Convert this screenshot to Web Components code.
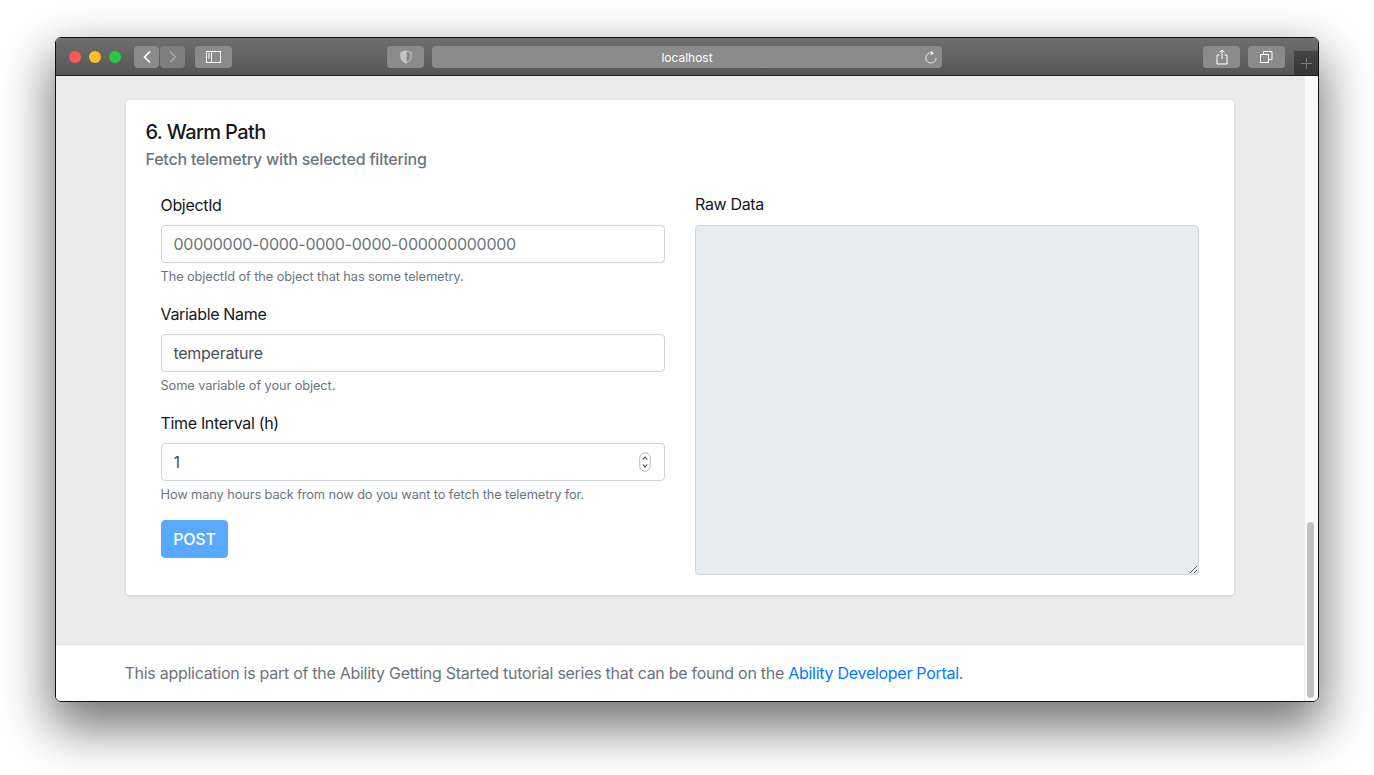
<!DOCTYPE html>
<html lang="en">
<head>
<meta charset="utf-8">
<title>Warm Path</title>
<style>
    html, body {
        margin: 0;
        height: 100%;
        overflow: hidden;
        background: #fff;
        font-family: Inter, "Noto Sans", sans-serif;
    }
</style>
</head>
<body>
<mac-window>
    <browser-toolbar slot="toolbar"></browser-toolbar>
    <warm-path-card></warm-path-card>
    <site-footer slot="footer">
        This application is part of the Ability Getting Started tutorial series that can be found on the
        <a href="#">Ability Developer Portal</a>.
    </site-footer>
</mac-window>

<script>
class MacWindow extends HTMLElement {
    constructor() {
        super();
        this.attachShadow({ mode: 'open' });
        this.shadowRoot.innerHTML = `
            <style>
                :host {
                    display: flex;
                    flex-direction: column;
                    box-sizing: border-box;
                    width: 1264px;
                    height: 665px;
                    margin: 37px 0 0 55px;
                    border: 1px solid #111;
                    border-radius: 6px;
                    overflow: hidden;
                    box-shadow: 0 22px 50px 4px rgba(0,0,0,.55);
                }
                .content { flex: 1; display: flex; min-height: 0; }
                .page { flex: 1; display: flex; flex-direction: column; min-width: 0; }
                main {
                    flex: 1;
                    background: #ebebeb;
                    padding: 24px 70px;
                }
                .scrollbar {
                    box-sizing: border-box;
                    width: 14px;
                    padding: 446px 3px 3px;
                    background: #fafafa;
                    border-left: 1px solid #efefef;
                    display: flex;
                }
                .thumb { flex: 1; margin-left: -1px; margin-right: 1px; background: #c1c1c1; border-radius: 4px; }
            </style>
            <slot name="toolbar"></slot>
            <div class="content">
                <div class="page">
                    <main><slot></slot></main>
                    <slot name="footer"></slot>
                </div>
                <div class="scrollbar"><div class="thumb"></div></div>
            </div>
        `;
    }
}

class BrowserToolbar extends HTMLElement {
    constructor() {
        super();
        this.attachShadow({ mode: 'open' });
        this.shadowRoot.innerHTML = `
            <style>
                :host {
                    display: flex;
                    align-items: flex-start;
                    box-sizing: border-box;
                    height: 38px;
                    padding-top: 8px;
                    background: linear-gradient(#6f6f6f, #565656);
                    border-bottom: 1px solid #1c1c1c;
                }
                .light { width: 12px; height: 12px; border-radius: 50%; margin: 5px 8px 0 0; }
                .btn {
                    box-sizing: border-box;
                    width: 37px;
                    height: 22px;
                    border-radius: 4px;
                    background: #8b8b8b;
                    display: flex;
                    align-items: center;
                    justify-content: center;
                }
                .nav { width: 25px; }
                .nav.off { background: #7e7e7e; }
                .address {
                    position: relative;
                    box-sizing: border-box;
                    width: 510px;
                    height: 22px;
                    margin-left: 8px;
                    border-radius: 4px;
                    background: #8b8b8b;
                    color: #fff;
                    font: 400 12px/23px Inter, sans-serif;
                    letter-spacing: -.02px;
                    text-align: center;
                }
                .address svg { position: absolute; right: 4px; top: 3px; }
                .newtab {
                    box-sizing: border-box;
                    width: 25px;
                    height: 25px;
                    margin: 4px 0 0 8px;
                    background: linear-gradient(#454545, #363636);
                    border-left: 1px solid #606060;
                    border-top: 1px solid #606060;
                    display: flex;
                    align-items: center;
                    justify-content: center;
                }
                svg { display: block; fill: none; stroke: #fff; stroke-width: 1; }
            </style>
            <span class="light" style="background:#fc5753;margin-left:13px"></span>
            <span class="light" style="background:#fdbc2e"></span>
            <span class="light" style="background:#27c93f;margin-right:13px"></span>
            <div class="btn nav" style="margin-right:1px">
                <svg width="10" height="14" viewBox="0 0 10 14" style="stroke-width:1.6"><path d="M8 1.5 2.5 7 8 12.5"/></svg>
            </div>
            <div class="btn nav off">
                <svg width="10" height="14" viewBox="0 0 10 14" style="stroke:#a8a8a8;stroke-width:1.4"><path d="M2 1.5 7.5 7 2 12.5"/></svg>
            </div>
            <div class="btn" style="margin-left:10px">
                <svg width="16" height="12" viewBox="0 0 16 12"><rect x=".5" y=".5" width="14" height="11"/><path d="M5.5 .5v11M2 3h2M2 5h2M2 7h2"/></svg>
            </div>
            <div class="btn" style="margin-left:155px">
                <svg width="12" height="14" viewBox="0 0 12 14" style="stroke:#c4c4c4"><path d="M6 1 1 2.6V7c0 3 2.2 4.8 5 6 2.8-1.2 5-3 5-6V2.6z"/><path d="M6 1 1 2.6V7c0 3 2.2 4.8 5 6z" fill="#c4c4c4"/></svg>
            </div>
            <div class="address">localhost
                <svg width="14" height="16" viewBox="0 0 14 16" style="stroke:#e6e6e6"><path d="M9.500 4.300A5.200 5.200 0 1 0 12.200 9"/><path d="M6.800 1.500 10 4.200 6.800 6.500z" fill="#e6e6e6" stroke="none"/></svg>
            </div>
            <div class="btn" style="margin-left:261px">
                <svg width="12" height="16" viewBox="0 0 12 16"><path d="M3.5 6H1v9h10V6H8.500M6 10V1M3.500 3.300 6 1l2.500 2.300"/></svg>
            </div>
            <div class="btn" style="margin-left:8px">
                <svg width="13" height="12" viewBox="0 0 13 12"><rect x=".5" y="3.500" width="8" height="8"/><path d="M3.500 3.500V.5h8.500v8H8.500"/></svg>
            </div>
            <div class="newtab">
                <svg width="11" height="11" viewBox="0 0 11 11" style="stroke:#7d7d7d"><path d="M5.500 0v11M0 5.500h11"/></svg>
            </div>
        `;
    }
}

class FormField extends HTMLElement {
    constructor() {
        super();
        this.attachShadow({ mode: 'open' });
        const type = this.getAttribute('type') || 'text';
        const value = this.getAttribute('value') || '';
        const placeholder = this.getAttribute('placeholder') || '';
        this.shadowRoot.innerHTML = `
            <style>
                :host { display: block; margin-bottom: 16px; }
                label {
                    display: block;
                    font-size: 16px;
                    line-height: 24px;
                    letter-spacing: -.33px;
                    margin-bottom: 8px;
                    text-indent: -.5px;
                    color: #16181b;
                }
                .control { position: relative; }
                input {
                    display: block;
                    box-sizing: border-box;
                    width: 100%;
                    height: 38px;
                    padding: 6px 12px 6px 11.500px;
                    border: 1px solid #ced4da;
                    border-radius: 4px;
                    background: #fff;
                    color: #495057;
                    font: 400 16px/24px Inter, sans-serif;
                    letter-spacing: -.28px;
                    outline: none;
                    -moz-appearance: textfield;
                }
                input::placeholder { color: #6c757d; opacity: 1; }
                input::-webkit-outer-spin-button,
                input::-webkit-inner-spin-button { -webkit-appearance: none; margin: 0; }
                .spin { position: absolute; right: 14px; top: 9px; display: none; }
                :host([type=number]) .spin { display: block; }
                small {
                    display: block;
                    margin-top: 4px;
                    font-size: 12.8px;
                    line-height: 19px;
                    letter-spacing: -.1px;
                    text-indent: -.5px;
                    color: #6c757d;
                }
            </style>
            <label><slot name="label"></slot></label>
            <div class="control">
                <input type="${type}" value="${value}" placeholder="${placeholder}">
                <svg class="spin" width="12" height="20" viewBox="0 0 12 20" fill="none">
                    <rect x=".75" y=".75" width="10.500" height="18.500" rx="5.250" stroke="#b9b9b9" stroke-width="1"/>
                    <path d="M3.800 7.500 6 5l2.200 2.500M3.800 12.500 6 15l2.200-2.500" stroke="#333" stroke-width="1.100"/>
                </svg>
            </div>
            <small><slot name="help"></slot></small>
        `;
    }
}

class WarmPathCard extends HTMLElement {
    constructor() {
        super();
        this.attachShadow({ mode: 'open' });
        this.shadowRoot.innerHTML = `
            <style>
                :host {
                    display: block;
                    box-sizing: border-box;
                    height: 495px;
                    padding: 20px;
                    background: #fff;
                    border-radius: 4px;
                    box-shadow: 0 1px 3px rgba(0,0,0,.12);
                }
                h5 {
                    margin: 0 0 6px;
                    font-size: 20px;
                    line-height: 24px;
                    font-weight: 500;
                    letter-spacing: -.62px;
                    text-indent: -.5px;
                    color: #16181b;
                }
                h6 {
                    margin: 0 0 24px;
                    font-size: 16px;
                    line-height: 19px;
                    font-weight: 500;
                    letter-spacing: -.2px;
                    text-indent: -.5px;
                    color: #6c757d;
                }
                .row { display: grid; grid-template-columns: 1fr 1fr; }
                .col { padding: 0 15px; min-width: 0; }
                .raw-label {
                    display: block;
                    font-size: 16px;
                    line-height: 24px;
                    letter-spacing: -.33px;
                    margin: -1px 0 9px;
                    color: #16181b;
                }
                textarea {
                    display: block;
                    box-sizing: border-box;
                    width: 100%;
                    height: 350px;
                    border: 1px solid #ced4da;
                    border-radius: 4px;
                    background: #e9ecef;
                    outline: none;
                }
                button {
                    height: 38px;
                    width: 67px;
                    padding: 0;
                    border: 1px solid #59a9ff;
                    border-radius: 4px;
                    background: #59a9ff;
                    color: #fff;
                    font: 500 16px Inter, sans-serif;
                    letter-spacing: -.2px;
                }
            </style>
            <h5>6. Warm Path</h5>
            <h6>Fetch telemetry with selected filtering</h6>
            <div class="row">
                <div class="col">
                    <form-field placeholder="00000000-0000-0000-0000-000000000000">
                        <span slot="label">ObjectId</span>
                        <span slot="help">The objectId of the object that has some telemetry.</span>
                    </form-field>
                    <form-field value="temperature">
                        <span slot="label">Variable Name</span>
                        <span slot="help">Some variable of your object.</span>
                    </form-field>
                    <form-field type="number" value="1">
                        <span slot="label">Time Interval (h)</span>
                        <span slot="help">How many hours back from now do you want to fetch the telemetry for.</span>
                    </form-field>
                    <button type="button">POST</button>
                </div>
                <div class="col">
                    <span class="raw-label">Raw Data</span>
                    <textarea readonly></textarea>
                </div>
            </div>
        `;
    }
}

class SiteFooter extends HTMLElement {
    constructor() {
        super();
        this.attachShadow({ mode: 'open' });
        this.shadowRoot.innerHTML = `
            <style>
                :host {
                    display: flex;
                    align-items: center;
                    flex: none;
                    box-sizing: border-box;
                    height: 57px;
                    padding-left: 68.500px;
                    background: #fff;
                    border-top: 1px solid #dee2e6;
                    color: #6c757d;
                    font-size: 16px;
                    letter-spacing: -.28px;
                }
                ::slotted(a) { color: #007bff; text-decoration: none; }
                p { margin: 0; }
            </style>
            <p><slot></slot></p>
        `;
    }
}

customElements.define('form-field', FormField);
customElements.define('warm-path-card', WarmPathCard);
customElements.define('browser-toolbar', BrowserToolbar);
customElements.define('site-footer', SiteFooter);
customElements.define('mac-window', MacWindow);
</script>
</body>
</html>
